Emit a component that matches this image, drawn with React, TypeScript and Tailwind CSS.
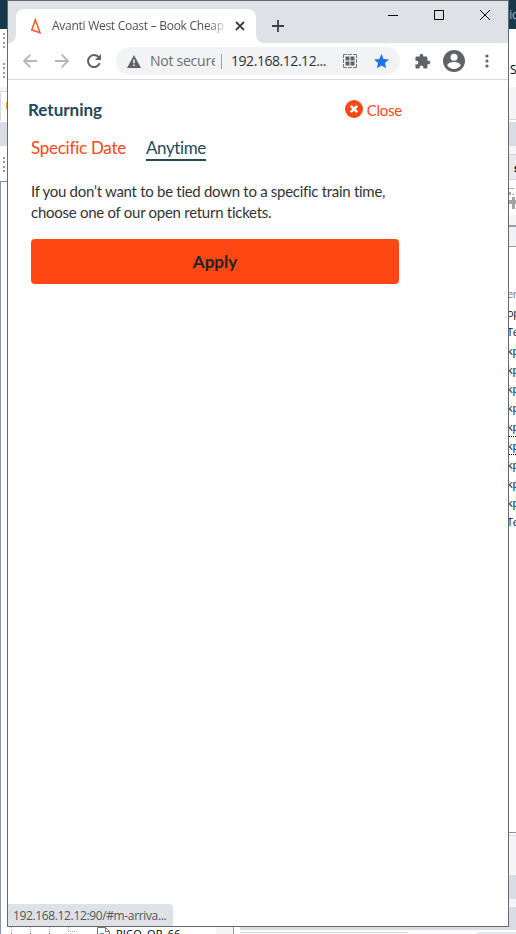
import React from "react";

const ui = "font-['Open_Sans','Noto_Sans',sans-serif]";
const brand = "font-['Lato','Open_Sans',sans-serif]";

function Dots() {
  return (
    <div className="ml-[3px] flex h-[15px] w-[2px] shrink-0 flex-col justify-between">
      {[0, 1, 2, 3].map((i) => (
        <i key={i} className="h-[2px] w-[2px] bg-[#999]" />
      ))}
    </div>
  );
}

function LeftStrip() {
  return (
    <div className="flex w-[7px] shrink-0 flex-col overflow-hidden bg-white">
      <div className="h-[29px] shrink-0 bg-[#17374b]" />
      <div className="h-[4px] shrink-0" />
      <Dots />
      <div className="h-[15px] shrink-0" />
      <Dots />
      <div className="mt-[9px] h-[4px] shrink-0 bg-[#f5f5f7]" />
      <div className="flex h-[30px] shrink-0 justify-end border-l border-t border-[#d5d9e2] pt-[10px]">
        <div className="h-[7px] w-[1px] bg-[#eda52f]" />
      </div>
      <div className="mt-[1px] h-[24px] shrink-0 bg-[#d8dce4]" />
      <div className="h-[11px] shrink-0" />
      <Dots />
      <div className="mt-[9px] grow border-l border-t border-[#8493b0]" />
    </div>
  );
}

const rows = ["er", "op", "Te", "kp", "kp", "kp", "kp", "kp", "kp", "kp", "kp", "kp", "Te"];

function RightStrip() {
  return (
    <div className={`flex w-[7px] shrink-0 flex-col overflow-hidden bg-white text-black ${ui}`}>
      <div className="h-[29px] shrink-0 whitespace-nowrap bg-[#17374b] text-[13px] leading-[29px] tracking-[-0.5px] text-[#9db0bd]">
        ic
      </div>
      <div className="h-[58px] shrink-0 pl-[1px] pt-[33px] text-[12px] leading-[15px]">S</div>
      <div className="h-[33px] shrink-0 border-b border-[#d5d6da] bg-[#f5f5f7]" />
      <div className="mt-[2px] h-[24px] shrink-0 bg-[#d8dce4]" />
      <div className="h-[8px] shrink-0 bg-[#f5f5f7]" />
      <div className="h-[26px] shrink-0 border-y border-[#cfd3db] bg-[#e8eaf0] pl-[5px] text-[11px] font-bold leading-[26px]">s</div>
      <div className="h-[35px] shrink-0 pt-[7px]">
        <svg width="7" height="23" fill="#a3a3a3">
          <path d="M0 1h5v1H0zM0 5h2v3H0zM3 7h2v1H3zM3 10h3v3h1v4H6v5H3v-5H0v-4h3z" />
        </svg>
      </div>
      <div className="h-[12px] shrink-0 border-b-2 border-[#999daa] bg-[#f5f5f7]" />
      <div className="h-[20px] shrink-0 border-b border-[#999] bg-[#f1f2f5]" />
      <div className="flex h-[585px] shrink-0 flex-col pt-[37px]">
        {rows.map((t, i) => (
          <div
            key={i}
            className={`h-[19px] shrink-0 whitespace-nowrap text-[11px] leading-[17px] tracking-[-0.4px] ${
              i === 0 ? "text-[#777]" : "text-[#111]"
            } ${i === 8 ? "border-y border-dotted border-black" : "border-y border-transparent"}`}
          >
            <span className="-ml-[2px]">{t}</span>
          </div>
        ))}
      </div>
      <div className="h-[4px] shrink-0 border-b border-t border-b-[#d5d9e2] border-t-[#8493b0]" />
      <div className="h-[39px] shrink-0 bg-[#f5f5f7]" />
      <div className="h-[24px] shrink-0 bg-[#d8dce4]" />
      <div className="h-[8px] shrink-0 bg-[#f5f5f7]" />
      <div className="grow bg-[#d8dce4]" />
    </div>
  );
}

function TabStrip() {
  return (
    <div className="flex h-[42px] shrink-0 bg-[#dee1e6]">
      <div className="flex w-[8px] items-end bg-white">
        <div className="h-full w-[8px] rounded-br-[8px] bg-[#dee1e6]" />
      </div>
      <div className="w-[240px] bg-[#dee1e6] pt-[8px]">
        <div className="flex h-[34px] items-center rounded-t-[8px] bg-white pl-[14px]">
          <svg width="12" height="18" viewBox="0 0 12 18" fill="none" stroke="#f9572c" strokeWidth="1.5">
            <path d="M5.300 2.800 1.800 13 10 15.700Z" />
          </svg>
          <span className={`ml-[10px] w-[174px] overflow-hidden whitespace-nowrap bg-gradient-to-r from-[#45494d] from-[88%] to-[#ddd] bg-clip-text text-[12px] leading-[18px] tracking-[-0.27px] text-transparent ${ui}`}>
            Avanti West Coast – Book Cheap
          </span>
          <svg className="ml-[9px]" width="10" height="10" stroke="#3c4043" strokeWidth="1.8">
            <path d="M1 1l8 8M9 1l-8 8" />
          </svg>
        </div>
      </div>
      <div className="w-[8px] bg-white">
        <div className="h-full rounded-bl-[8px] bg-[#dee1e6]" />
      </div>
      <svg className="ml-[8px] mt-[19px]" width="12" height="12" stroke="#3c4043" strokeWidth="1.8">
        <path d="M6 0v12M0 6h12" />
      </svg>
      <div className="grow" />
      <svg className="mt-[8px]" width="104" height="13" fill="none" stroke="#000" strokeWidth="1">
        <path d="M0 6.500h10M46.500 1.500h9v9h-9zM92 1l10 10M102 1L92 11" />
      </svg>
      <div className="w-[16px]" />
    </div>
  );
}

function Toolbar() {
  return (
    <div className={`flex h-[37px] shrink-0 items-center border-b border-[#d8dadd] bg-white pl-[15px] ${ui}`}>
      <svg width="14" height="14" fill="none" stroke="#b5b6b8" strokeWidth="1.9">
        <path d="M14 7H1.500M7.300.7 1 7l6.300 6.300" />
      </svg>
      <svg className="ml-[18px]" width="14" height="14" fill="none" stroke="#b5b6b8" strokeWidth="1.9">
        <path d="M0 7h12.500M6.700.7 13 7l-6.300 6.300" />
      </svg>
      <svg className="ml-[18px]" width="15" height="14" viewBox="0 0 15 14" fill="none" stroke="#5f6368" strokeWidth="2">
        <path d="M12.700 9.200A6 6 0 1 1 11.500 3L13 4.500" />
        <path d="M14 0v6H8z" fill="#5f6368" stroke="none" />
      </svg>
      <div className="ml-[14px] flex h-[28px] w-[284px] items-center rounded-full bg-[#f1f3f4] pl-[11px]">
        <svg width="14" height="13" viewBox="0 0 14 13">
          <path d="M7 0l7 13H0z" fill="#5f6368" />
          <path d="M6.200 4.500h1.600v3.800H6.200zM6.200 9.500h1.600v1.600H6.200z" fill="#f1f3f4" />
        </svg>
        <span className="ml-[9px] w-[65px] overflow-hidden whitespace-nowrap text-[14px] leading-[20px] tracking-[-0.25px] text-[#6b6f73]">
          Not secure
        </span>
        <div className="ml-[6px] h-[15px] w-px bg-[#9aa0a6]" />
        <span className="ml-[9px] w-[111px] whitespace-nowrap text-[14px] leading-[20px] tracking-[-0.45px] text-[#303236]">
          192.168.12.12...
        </span>
        <svg className="ml-[1px]" width="14" height="14" viewBox="0 0 14 14" fill="none" stroke="#5f6368">
          <path d="M.5 4V.5H4M10 .5h3.500V4M13.500 10v3.500H10M4 13.500H.5V10M5 .5h4M5 13.500h4M.5 5v4M13.500 5v4" strokeOpacity="0.85" />
          <path d="M2.500 2.500h4v4h-4zM7.500 2.500h4v4h-4zM2.500 7.500h4v4h-4zM7.500 7.500h4v4h-4z" fill="#5f6368" stroke="none" />
        </svg>
        <svg className="ml-[17px]" width="15" height="15" viewBox="2 2 20 20" fill="#1a73e8">
          <path d="M12 17.270 18.180 21l-1.640-7.030L22 9.240l-7.190-.61L12 2 9.190 8.630 2 9.240l5.460 4.730L5.820 21z" />
        </svg>
      </div>
      <svg className="ml-[14px]" width="17" height="17" viewBox="0 0 24 24" fill="#5f6368">
        <path d="M20.500 11H19V7c0-1.100-.9-2-2-2h-4V3.500a2.500 2.500 0 0 0-5 0V5H4c-1.100 0-2 .9-2 2v3.800h1.500a2.700 2.700 0 0 1 0 5.400H2V20c0 1.100.9 2 2 2h3.800v-1.500a2.700 2.700 0 0 1 5.400 0V22H17c1.100 0 2-.9 2-2v-4h1.500a2.500 2.500 0 0 0 0-5z" />
      </svg>
      <svg className="ml-[12px]" width="22" height="22" viewBox="0 0 22 22">
        <circle cx="11" cy="11" r="11" fill="#5f6368" />
        <circle cx="11" cy="7.300" r="3.500" fill="#fff" />
        <path d="M4.200 15.300c.8-2.500 4-3.400 6.800-3.400s6 .9 6.800 3.400a8 8 0 0 1-13.600 0z" fill="#fff" />
      </svg>
      <svg className="ml-[20px]" width="4" height="14" fill="#5f6368">
        <circle cx="2" cy="2" r="1.600" />
        <circle cx="2" cy="7" r="1.600" />
        <circle cx="2" cy="12" r="1.600" />
      </svg>
    </div>
  );
}

function Panel() {
  return (
    <div className={`flex grow flex-col bg-white ${brand}`}>
      <div className="mt-[18px] flex h-[24px] w-[394px] items-center justify-between pl-[20px]">
        <h1 className="text-[17px] font-bold leading-[26px] text-[#23485a]">Returning</h1>
        <button className="flex items-center text-[15px] leading-[24px] tracking-[-0.25px] text-[#ff4713]">
          <svg className="-mt-[2px] mr-[4px]" width="18" height="18">
            <circle cx="9" cy="9" r="9" fill="#ff4713" />
            <path d="M5.800 5.800l6.400 6.400M12.200 5.800l-6.400 6.400" stroke="#fff" strokeWidth="2.500" />
          </svg>
          Close
        </button>
      </div>
      <div className="ml-[23px] mt-[14px] flex h-[25px] gap-[20px] text-[17px] leading-[23px]">
        <span className="w-[95px] whitespace-nowrap tracking-[-0.26px] text-[#ff4713]">Specific Date</span>
        <span className="w-[60px] whitespace-nowrap border-b-2 border-[#23485a] tracking-[-0.4px] text-[#23485a]">Anytime</span>
      </div>
      <p className="ml-[23px] mt-[20px] whitespace-nowrap text-[15px] leading-[21px] text-[#333]">
        <span className="tracking-[-0.29px]">If you don’t want to be tied down to a specific train time,</span>
        <br />
        <span className="tracking-[-0.27px]">choose one of our open return tickets.</span>
      </p>
      <button className="ml-[23px] mt-[16px] h-[45px] w-[368px] rounded-[4px] bg-[#ff4713] text-[17px] font-bold text-[#222326]">
        Apply
      </button>
      <div className="grow" />
      <div className={`h-[22px] w-[165px] whitespace-nowrap rounded-tr-[4px] bg-[#dee1e6] pl-[5px] text-[12px] leading-[23px] tracking-[-0.36px] text-[#55585c] ${ui}`}>
        192.168.12.12:90/#m-arriva...
      </div>
    </div>
  );
}

function BottomStrip() {
  return (
    <div className={`flex h-[7px] overflow-hidden bg-white ${ui}`}>
      <div className="flex w-[97px] justify-end border-l border-[#8493b0]">
        <div className="w-[19px] border-l border-dotted border-[#aaa]" />
        <div className="w-[19px] border-l border-dotted border-[#aaa]" />
        <div className="w-[19px] border-l border-dotted border-[#aaa]" />
        <div className="h-[5px] w-[9px] border-b border-l border-dotted border-[#aaa]" />
        <div className="w-[20px]" />
      </div>
      <svg width="13" height="7" fill="none" stroke="#777">
        <path d="M.5 7V.5h8l4 4V7M8.500 0v4.500h4" />
        <path d="M3 6.500h4" stroke="#3498c8" />
      </svg>
      <div className="ml-[6px] w-[100px] whitespace-nowrap text-[11px] leading-[13px] tracking-[0.2px] text-black">PICO_OR_66</div>
      <div className="h-full w-[17px] bg-[#f5f5f7]" />
      <div className="h-full w-[7px] border-l border-[#9095a2]" />
      <div className="w-[168px] bg-[#f1f3f7]">
        <div className="h-[3px] bg-[#d8dce4]" />
        <div className="h-[2px] bg-white" />
        <div className="h-[1px] bg-[#d8dce4]" />
      </div>
      <div className="w-[69px]"><div className="h-[3px] bg-[#d8dce4]" /></div>
      <div className="grow bg-[#e4e7ed]"><div className="h-[3px] bg-[#d8dce4]" /><div className="h-[2px] bg-white" /></div>
    </div>
  );
}

export default function App() {
  return (
    <div className="flex h-[934px] w-[516px] flex-col overflow-hidden bg-white">
      <div className="flex h-[927px] shrink-0">
        <LeftStrip />
        <div className="flex w-[502px] shrink-0 flex-col border border-[#66686b]">
          <TabStrip />
          <Toolbar />
          <Panel />
        </div>
        <RightStrip />
      </div>
      <BottomStrip />
    </div>
  );
}
